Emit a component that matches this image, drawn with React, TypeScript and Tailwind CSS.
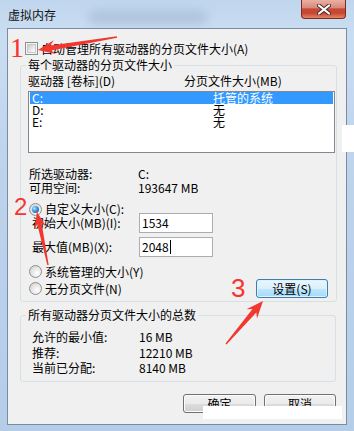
const cjk = "font-['Noto_Sans_CJK_SC',sans-serif]";

function Radio({ checked = false }: { checked?: boolean }) {
  return (
    <div className="flex h-[13px] w-[13px] shrink-0 items-center justify-center rounded-full border border-[#8e8f8f] bg-[radial-gradient(circle_at_65%_65%,#ffffff_0%,#e6e6e6_50%,#c9cacb_100%)]">
      {checked && (
        <div className="h-[7px] w-[7px] rounded-full bg-[radial-gradient(circle_at_35%_35%,#b9e4ff_0%,#3c93d8_45%,#0f4f8c_100%)]" />
      )}
    </div>
  );
}

function Checkbox() {
  return (
    <div className="flex h-[13px] w-[13px] shrink-0 items-center justify-center border border-[#8e8f8f] bg-[#f4f4f4]">
      <div className="h-[9px] w-[9px] border border-[#c8c8c8] bg-[linear-gradient(135deg,#cbcbcb_0%,#f0f0f0_70%,#ffffff_100%)]" />
    </div>
  );
}

function WinButton({ label, active = false, width }: { label: string; active?: boolean; width: string }) {
  return (
    <div
      className={
        active
          ? `flex h-[19px] ${width} items-center justify-center rounded-[3px] border border-[#3c7fb1] bg-[linear-gradient(to_bottom,#eaf6fd_0%,#d9f0fc_50%,#bee6fd_51%,#a7d9f5_100%)] shadow-[inset_0_0_0_1px_#dff2fc]`
          : `flex h-[19px] ${width} items-center justify-center rounded-[3px] border border-[#707070] bg-[linear-gradient(to_bottom,#f2f2f2_0%,#ebebeb_50%,#dddddd_51%,#cfcfcf_100%)] shadow-[inset_0_0_0_1px_#fcfcfc]`
      }
    >
      {label}
    </div>
  );
}

export default function App() {
  return (
    <div
      className={`relative h-[431px] w-[354px] overflow-hidden bg-[linear-gradient(180deg,#c0d6ee_0%,#cadef2_8%,#bdd3ec_40%,#b6cde8_100%)] text-[12px] leading-[12px] text-black ${cjk}`}
    >
      {/* blurred glass behind the title */}
      <div className="absolute left-[88px] top-[9px] h-[16px] w-[120px] rounded-full bg-[#a4bad2] opacity-60 blur-[5px]" />

      <div className="relative flex h-[28px] items-start">
        <span className="ml-[8px] mt-[9px] text-[#111]">虚拟内存</span>
        <div className="ml-auto mr-[8px] flex h-[19px] w-[45px] items-center justify-center rounded-b-[4px] border border-t-0 border-[#7d2a22] bg-[linear-gradient(to_bottom,#eab0a3_0%,#d98a7c_42%,#c54a38_50%,#c8452f_72%,#e58663_100%)]">
          <svg width="14" height="11" viewBox="0 0 14 11">
            <path d="M2 1.5 L12 9.5 M12 1.5 L2 9.5" stroke="#4b2a2a" strokeWidth="4" strokeLinecap="round" />
            <path d="M2 1.5 L12 9.5 M12 1.5 L2 9.5" stroke="#ffffff" strokeWidth="2.2" strokeLinecap="round" />
          </svg>
        </div>
      </div>

      <div className="relative ml-[7px] h-[397px] w-[340px] border border-[#7a8ca3] bg-[#f0f0f0]">
        <div className="ml-[17px] mt-[13px] flex h-[13px] items-center gap-[3px]">
          <Checkbox />
          <span>自动管理所有驱动器的分页文件大小(A)</span>
        </div>

        <fieldset className="ml-[12px] mt-[4px] w-[316px] rounded-[3px] border border-[#d5dfe5] pb-[3px] pl-[7px] pr-[1px]">
          <legend className="-ml-[2px] h-[12px] px-[2px]">每个驱动器的分页文件大小</legend>
          <div className="mt-[4px] flex">
            <span className="w-[156px]">驱动器 [卷标](D)</span>
            <span>分页文件大小(MB)</span>
          </div>
          <div className="mt-[4px] h-[62px] w-[307px] border border-[#828790] bg-white px-[1px]">
            <div className="flex h-[12px] bg-[#3399ff] text-white">
              <span className="w-[183px] pl-[2px]">C:</span>
              <span>托管的系统</span>
            </div>
            <div className="flex h-[12px]">
              <span className="w-[183px] pl-[2px]">D:</span>
              <span>无</span>
            </div>
            <div className="flex h-[12px]">
              <span className="w-[183px] pl-[2px]">E:</span>
              <span>无</span>
            </div>
          </div>

          <div className="mt-[15px] flex pl-[1px]">
            <span className="w-[109px]">所选驱动器:</span>
            <span>C:</span>
          </div>
          <div className="mt-[2px] flex pl-[1px]">
            <span className="w-[109px]">可用空间:</span>
            <span>193647 MB</span>
          </div>

          <div className="mt-[9px] flex h-[10px] items-start gap-[3px] pl-[1px]">
            <Radio checked />
            <span>自定义大小(C):</span>
          </div>
          <div className="flex h-[20px] items-center pl-[4px]">
            <span className="w-[107px]">初始大小(MB)(I):</span>
            <div className="flex h-[20px] w-[74px] items-center border border-[#abadb3] bg-white pl-[2px]">1534</div>
          </div>
          <div className="mt-[4px] flex h-[20px] items-center pl-[4px]">
            <span className="w-[107px]">最大值(MB)(X):</span>
            <div className="flex h-[20px] w-[74px] items-center border border-[#abadb3] bg-white pl-[2px]">
              2048
              <span className="ml-[1px] inline-block h-[14px] w-px bg-black" />
            </div>
          </div>

          <div className="mt-[8px] flex h-[13px] items-center gap-[3px] pl-[1px]">
            <Radio />
            <span>系统管理的大小(Y)</span>
          </div>
          <div className="mt-[1px] flex h-[19px] items-center gap-[3px] pl-[1px] pr-[7px]">
            <Radio />
            <span>无分页文件(N)</span>
            <div className="ml-auto">
              <WinButton label="设置(S)" active width="w-[72px]" />
            </div>
          </div>
        </fieldset>

        <fieldset className="ml-[12px] mt-[7px] w-[316px] rounded-[3px] border border-[#d5dfe5] pb-[7px] pl-[7px] pr-[1px]">
          <legend className="-ml-[2px] h-[12px] px-[2px]">所有驱动器分页文件大小的总数</legend>
          <div className="mt-[10px] flex pl-[4px]">
            <span className="w-[107px]">允许的最小值:</span>
            <span>16 MB</span>
          </div>
          <div className="mt-[4px] flex pl-[4px]">
            <span className="w-[107px]">推荐:</span>
            <span>12210 MB</span>
          </div>
          <div className="mt-[3px] flex pl-[4px]">
            <span className="w-[107px]">当前已分配:</span>
            <span>8140 MB</span>
          </div>
        </fieldset>

        <div className="mt-[12px] flex justify-end gap-[8px] pr-[10px]">
          <WinButton label="确定" width="w-[73px]" />
          <WinButton label="取消" width="w-[72px]" />
        </div>
      </div>

      {/* annotations laid over the screenshot */}
      <div className="absolute left-[203px] top-[406px] h-[13px] w-[139px] bg-white" />
      <div className="absolute left-[342px] top-[125px] h-[27px] w-[12px] bg-white" />

      <svg className="pointer-events-none absolute left-0 top-0" width="354" height="431" viewBox="0 0 354 431">
        <polygon points="38,50 55.9,54.1 51.2,50.4 117.1,37.7 116.9,36.3 50.4,45.4 53.7,40.3" fill="#f2372f" />
        <polygon points="37,212 46.1,226.5 41.6,223.3 48.7,264.9 47.3,265.1 37.2,224.1 34.3,228.9" fill="#f2372f" />
        <polygon points="263,301 257,318.4 256.3,312.4 226.5,344.5 225.5,343.5 252.5,309.1 246.5,309.2" fill="#f2372f" />
      </svg>
      <span className="absolute left-[10px] top-[34px] font-['Liberation_Serif',serif] text-[28px] leading-[28px] text-[#f8342f]">1</span>
      <span className="absolute left-[14px] top-[195px] font-['Liberation_Sans',sans-serif] text-[24px] leading-[24px] text-[#f8342f]">2</span>
      <span className="absolute left-[231px] top-[275px] font-['Liberation_Sans',sans-serif] text-[26px] leading-[26px] text-[#f8342f]">3</span>
    </div>
  );
}
